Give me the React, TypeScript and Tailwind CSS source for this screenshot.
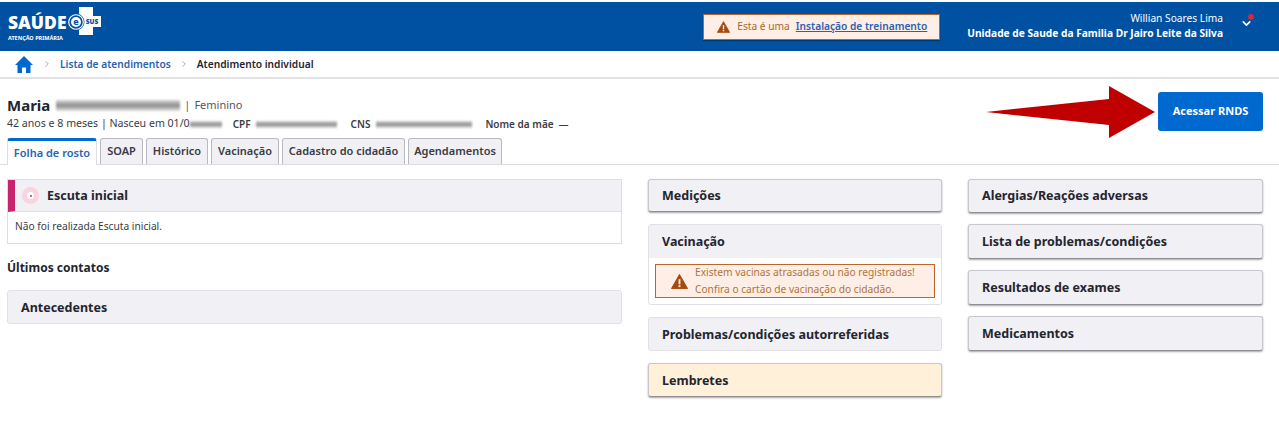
import React from 'react';
import { ChevronRight, ChevronDown } from 'lucide-react';

const font = { fontFamily: '"Noto Sans", "Open Sans", sans-serif' };

const Redacted = ({ className }: { className: string }) => (
    <span className={`inline-block bg-gradient-to-b from-[#d8d8d8] via-[#8f8f8f] to-[#e2e2e2] blur-[1px] ${className}`} />
);

const WarningIcon = ({ className }: { className: string }) => (
    <svg viewBox="0 0 18 16" className={className}>
        <path d="M9 .5 L17.6 15.5 H.4 Z" fill="#a34a0e" stroke="#a34a0e" strokeLinejoin="round" />
        <rect x="8" y="5.5" width="2" height="5.5" fill="#ffeee6" />
        <rect x="8" y="12" width="2" height="2" fill="#ffeee6" />
    </svg>
);

const Logo = () => (
    <div className="flex items-start text-white">
        <div className="flex flex-col pt-[1px] w-[61px] pl-[1px]">
            <span className="text-[17.5px] leading-[20px] font-black">SAÚDE</span>
            <span className="text-[5.5px] leading-[8px] font-bold mt-[2px] whitespace-nowrap">ATENÇÃO PRIMÁRIA</span>
        </div>
        <svg width="33" height="28" viewBox="0 0 33 28" className="mt-[-4px]">
            <path d="M11 0h14v9h8v11h-8v8H11v-8H7V9h4z" fill="#fff" />
            <circle cx="8" cy="15" r="8.5" fill="#0051a2" />
            <circle cx="8" cy="15" r="7.3" fill="none" stroke="#fff" strokeWidth="1.1" />
            <circle cx="8" cy="15" r="5" fill="#fff" />
            <text x="8" y="18" textAnchor="middle" fontSize="9" fontWeight="800" fill="#0051a2">e</text>
            <text x="24" y="17" textAnchor="middle" fontSize="6.5" fontWeight="900" fill="#0051a2">SUS</text>
        </svg>
    </div>
);

const Header = () => (
    <div className="mt-[2px] h-[49px] bg-[#0051a2] flex items-center pl-[7px] pr-[26px]">
        <Logo />
        <div className="ml-auto flex items-center h-[26px] w-[237px] mr-[27px] border border-[#b9652c] bg-[#ffeee6] pl-[13px] text-[10.2px] whitespace-nowrap text-[#a8672c] shadow-[0_1px_1px_rgba(0,0,0,0.3)]">
            <WarningIcon className="w-[13px] h-[12px] mr-[7px]" />
            <span>Esta é uma</span>
            <span className="ml-[6px] font-semibold text-[#2a62b0] underline">Instalação de treinamento</span>
        </div>
        <div className="flex flex-col items-end text-white text-[10.2px] leading-[15px] mt-[-2px] whitespace-nowrap">
            <span>Willian Soares Lima</span>
            <span className="font-bold">Unidade de Saude da Familia Dr Jairo Leite da Silva</span>
        </div>
        <div className="relative ml-[17px] w-[13px] h-[16px] mt-[-4px]">
            <ChevronDown className="w-[13px] h-[13px] text-white" strokeWidth={3} />
            <span className="absolute right-[-1px] top-[-3px] w-[6px] h-[6px] rounded-full bg-[#d9263a]" />
        </div>
    </div>
);

const Breadcrumb = () => (
    <div className="h-[28px] flex items-center pl-[15px] border-b-2 border-[#e2e2e4] text-[10.2px]">
        <svg viewBox="0 0 18 17" className="w-[18px] h-[17px]">
            <path d="M9 0 L0 9 h2.5 V17 h4.5 v-5.5 h4 V17 h4.5 V9 H18 Z" fill="#0069d0" />
        </svg>
        <ChevronRight className="w-[10px] h-[10px] ml-[9px] text-[#9a9aa0]" />
        <span className="ml-[8px] pt-[1px] font-semibold text-[#2a62b0]">Lista de atendimentos</span>
        <ChevronRight className="w-[10px] h-[10px] ml-[8px] text-[#9a9aa0]" />
        <span className="ml-[8px] pt-[1px] font-semibold text-[#24252e]">Atendimento individual</span>
    </div>
);

const tabs = [
    { label: 'SOAP', width: 'w-[43px]' },
    { label: 'Histórico', width: 'w-[62px]' },
    { label: 'Vacinação', width: 'w-[68px]' },
    { label: 'Cadastro do cidadão', width: 'w-[123px]' },
    { label: 'Agendamentos', width: 'w-[94px]' },
];

const PatientHeader = () => (
    <div className="h-[86px] border-b border-[#dedee2] flex justify-between pl-[7px] pr-[16px]">
        <div className="flex flex-col">
            <div className="flex items-center h-[20px] mt-[16px] text-[#24252e]">
                <span className="text-[15px] font-bold">Maria</span>
                <Redacted className="ml-[6px] w-[124px] h-[11px]" />
                <span className="ml-[4px] text-[11px] text-[#55565e]">|</span>
                <span className="ml-[4px] text-[11px] text-[#55565e]">Feminino</span>
            </div>
            <div className="flex items-center h-[14px] mt-[2px] text-[10px] text-[#3a3b44] whitespace-nowrap">
                <span className="text-[10.6px]">42 anos e 8 meses | Nasceu em 01/0</span>
                <Redacted className="w-[32px] h-[7px]" />
                <span className="ml-[11px] font-semibold">CPF</span>
                <Redacted className="ml-[5px] w-[81px] h-[7px]" />
                <span className="ml-[14px] font-semibold">CNS</span>
                <Redacted className="ml-[6px] w-[96px] h-[7px]" />
                <span className="ml-[13px] font-semibold">Nome da mãe</span>
                <span className="ml-[5px]">—</span>
            </div>
            <div className="flex items-end gap-[3px] mt-[6px] h-[27px] text-[11px] font-semibold">
                <div className="w-[90px] h-[27px] flex items-center justify-center rounded-t-[3px] border-t-[3px] border-x border-t-[#0069d0] border-x-[#dedee2] bg-white text-[#2a62b0] relative top-[1px]">
                    Folha de rosto
                </div>
                {tabs.map(tab => (
                    <div key={tab.label} className={`${tab.width} h-[26px] flex items-center justify-center rounded-t-[3px] border border-b-0 border-[#b9b9c0] bg-[#f0f0f5] text-[#3a3b44]`}>
                        {tab.label}
                    </div>
                ))}
            </div>
        </div>
        <div className="flex items-start pt-[7px]">
            <svg width="169" height="52" viewBox="0 0 169 52" className="mr-[3px]">
                <path d="M0 26 L123 13 V0 L169 26 L123 52 V39 Z" fill="#c00000" />
            </svg>
            <div className="w-[105px] h-[39px] mt-[6px] rounded-[3px] bg-[#0069d0] flex items-center justify-center text-[11px] font-bold text-white">
                Acessar RNDS
            </div>
        </div>
    </div>
);

const Card = ({ title, tone = 'flat', height = 'h-[34px]' }: { title: string; tone?: 'flat' | 'raised' | 'note'; height?: string }) => {
    const tones = {
        flat: 'bg-[#f0f0f5] border-[#e0e0e5] pt-[2px]',
        raised: 'bg-[#f0f0f5] border-[#c8c8cc] border-b-[#8e8e94] shadow-[0_1px_2px_rgba(0,0,0,0.35)] pt-[1px]',
        note: 'bg-[#fff0d9] border-[#c8c8cc] border-b-[#8e8e94] shadow-[0_1px_2px_rgba(0,0,0,0.35)] pt-[2px]',
    };
    return (
        <div className={`${height} rounded-[3px] border ${tones[tone]} flex items-center pl-[13px] text-[12.5px] font-bold text-[#24252e]`}>
            {title}
        </div>
    );
};

const LeftColumn = () => (
    <div className="w-[615px] flex flex-col">
        <div className="h-[65px] border border-[#dedee2] flex flex-col">
            <div className="h-[32px] bg-[#f0f0f5] border-b border-[#dedee2] flex items-center border-l-[7px] border-l-[#c9256f] text-[12.5px] font-bold text-[#24252e]">
                <span className="ml-[7px] mr-[8px] w-[17px] h-[17px] rounded-full bg-[#fbd3de] flex items-center justify-center">
                    <span className="w-[7px] h-[7px] rounded-full bg-[#fff] flex items-center justify-center">
                        <span className="w-[2px] h-[2px] rounded-full bg-[#c9256f]" />
                    </span>
                </span>
                <span className="pt-[1px]">Escuta inicial</span>
            </div>
            <div className="flex-1 flex items-center pl-[7px] pb-[2px] text-[10.2px] text-[#3a3b44]">Não foi realizada Escuta inicial.</div>
        </div>
        <div className="mt-[16px] h-[16px] flex items-center text-[12px] font-bold text-[#24252e]">Últimos contatos</div>
        <div className="mt-[14px]">
            <Card title="Antecedentes" />
        </div>
    </div>
);

const MiddleColumn = () => (
    <div className="w-[294px] flex flex-col">
        <Card title="Medições" tone="raised" height="h-[33px]" />
        <div className="mt-[12px] h-[81px] rounded-[3px] border border-[#e0e0e5] flex flex-col">
            <div className="h-[33px] bg-[#f0f0f5] flex items-center pl-[13px] pt-[1px] text-[12.5px] font-bold text-[#24252e]">Vacinação</div>
            <div className="mt-[6px] mx-[6px] h-[34px] border border-[#b9652c] bg-[#ffeee6] flex items-center pl-[15px] text-[10.2px] leading-[17px] text-[#b0743a]">
                <WarningIcon className="w-[17px] h-[15px] mr-[7px] shrink-0" />
                <div className="flex flex-col">
                    <span>Existem vacinas atrasadas ou não registradas!</span>
                    <span>Confira o cartão de vacinação do cidadão.</span>
                </div>
            </div>
        </div>
        <div className="mt-[12px]">
            <Card title="Problemas/condições autorreferidas" />
        </div>
        <div className="mt-[12px]">
            <Card title="Lembretes" tone="note" />
        </div>
    </div>
);

const RightColumn = () => (
    <div className="w-[295px] flex flex-col gap-[11px]">
        <Card title="Alergias/Reações adversas" tone="raised" />
        <Card title="Lista de problemas/condições" tone="raised" height="h-[35px]" />
        <Card title="Resultados de exames" tone="raised" height="h-[35px]" />
        <Card title="Medicamentos" tone="raised" height="h-[35px]" />
    </div>
);

export default function App() {
    return (
        <div className="h-[448px] bg-white overflow-hidden" style={font}>
            <Header />
            <Breadcrumb />
            <PatientHeader />
            <div className="flex gap-[26px] pl-[7px] pt-[14px]">
                <LeftColumn />
                <MiddleColumn />
                <RightColumn />
            </div>
        </div>
    );
}
